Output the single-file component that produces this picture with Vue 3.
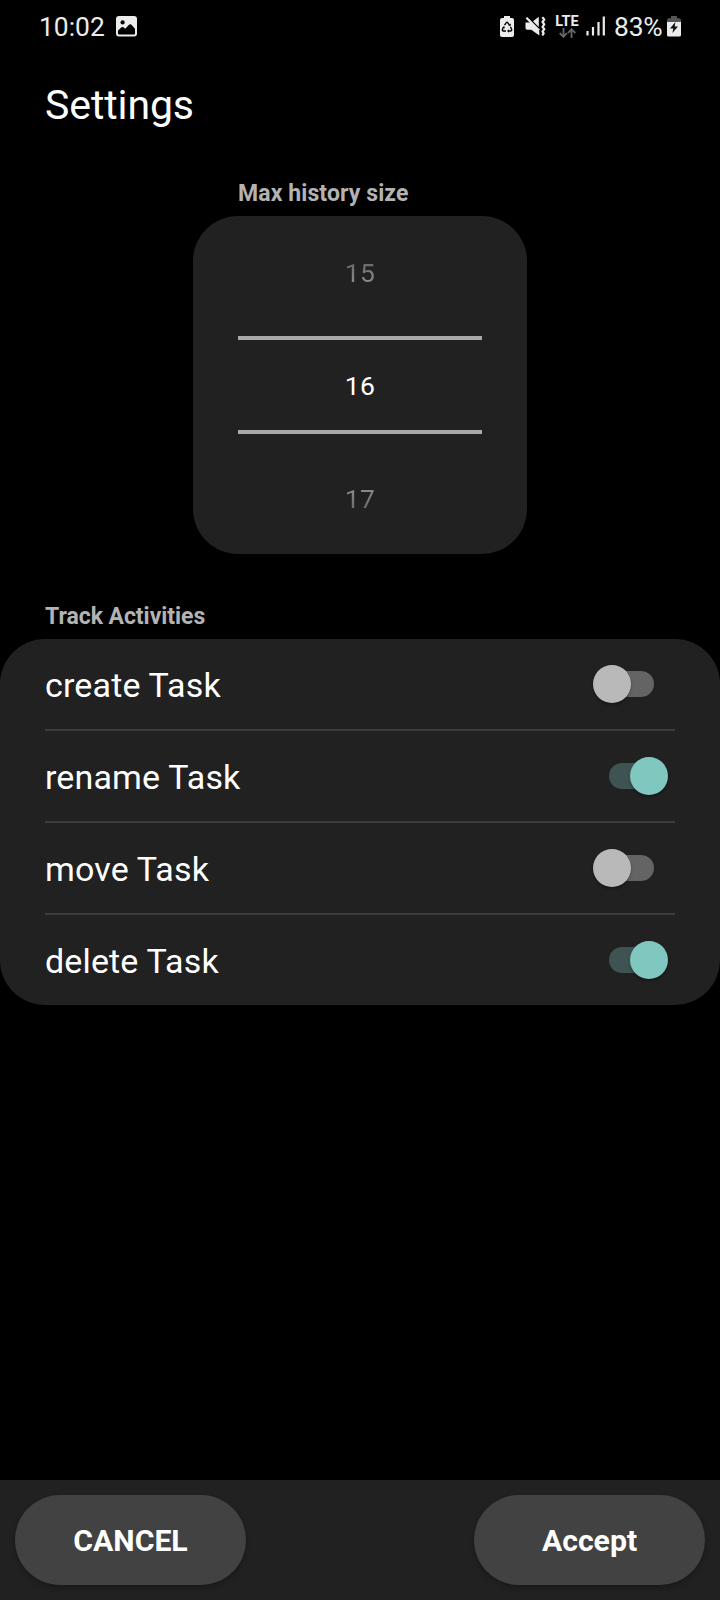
<script setup>
import { ref } from 'vue'

const historySizes = ref([15, 16, 17])
const selectedSize = ref(16)

const activities = ref([
  { label: 'create Task', enabled: false },
  { label: 'rename Task', enabled: true },
  { label: 'move Task', enabled: false },
  { label: 'delete Task', enabled: true },
])
</script>

<template>
  <div class="screen">
    <header class="status-bar">
      <span class="clock">10:02</span>
      <svg class="icon-image" width="22" height="22" viewBox="0 0 22 22">
        <rect x="1" y="1" width="21" height="20.5" rx="3" fill="#ececec" />
        <circle cx="7.6" cy="7.4" r="2.1" fill="#000" />
        <path d="M3 15.5 6.5 12.3Q7.5 11.5 8.5 12.3L10.2 13.8 14.3 9.6Q15.3 8.8 16.2 9.6L20 13.8V18.5Q20 19.5 19 19.5H4Q3 19.5 3 18.5Z" fill="#000" />
      </svg>
      <span class="spacer"></span>
      <svg class="icon-saver" width="14" height="22" viewBox="0 0 14 22">
        <path d="M4 0H10V2H12Q14 2 14 4V19Q14 21 12 21H2Q0 21 0 19V4Q0 2 2 2H4Z" fill="#ececec" />
        <g fill="none" stroke="#000" stroke-width="1.4">
          <path d="M4.5 9.2 6.3 6.7Q7 5.9 7.7 6.7L9.5 9.2" />
          <path d="M10.4 10.8 11.6 13.2Q12 14.8 10.7 15H8.3" />
          <path d="M6 15H3.5Q2 14.8 2.4 13.4L3.7 11" />
        </g>
        <path d="M8.2 9.7H10.8V7.4ZM8.9 13.2V16.8L7 15ZM2.2 11.6 4.2 10.1 4.9 12.5Z" fill="#000" />
      </svg>
      <svg class="icon-mute" width="21" height="21" viewBox="0 0 21 21">
        <path d="M0.5 6.6H5.3L14.3 15.6V19.5L6.3 13.7H2.2Q0.5 13.7 0.5 12Z" fill="#ececec" />
        <path d="M8 5.2 13.8 0.8V11Z" fill="#ececec" />
        <path d="M1.4 1.7 14.2 14.5" stroke="#ececec" stroke-width="2.2" />
        <path d="M17.3 1.3 19.3 3.5 17.5 6 19.3 8.4 17.5 10.8 19.3 13.2 17.5 15.6 18.7 17.3 17.3 19.3" fill="none" stroke="#ececec" stroke-width="2.2" stroke-linejoin="round" />
      </svg>
      <div class="network">
        <span>LTE</span>
        <svg width="17" height="10" viewBox="0 0 17 10" fill="none" stroke="#686868" stroke-width="1.8">
          <path d="M4.5 0V8.7M0.7 5 4.5 8.8 8 5" />
          <path d="M12.5 10V1.3M9 5 12.5 1.2 16.3 5" />
        </svg>
      </div>
      <svg class="icon-signal" width="20" height="20" viewBox="0 0 20 20" stroke="#ececec" stroke-width="2.2">
        <path d="M1.5 15V19.4M7 11V19.4M12.5 6V19.4M17.8 0.5V19.4" />
      </svg>
      <span class="percent">83%</span>
      <svg class="icon-battery" width="14" height="21" viewBox="0 0 14 21">
        <path d="M4 0H10V2.3H12Q14 2.3 14 4.3V6H0V4.3Q0 2.3 2 2.3H4Z" fill="#555" />
        <path d="M0 6H14V19Q14 20.5 12.5 20.5H1.5Q0 20.5 0 19Z" fill="#ececec" />
        <path d="M8.4 6 3 12.4H6.3L5.4 17 11 10.5H7.7Z" fill="#111" />
      </svg>
    </header>

    <h1 class="title">Settings</h1>

    <section class="history">
      <h2 class="section-label history-label">Max history size</h2>
      <div class="picker">
        <div
          v-for="size in historySizes"
          :key="size"
          class="option"
          :class="{ selected: size === selectedSize, below: size > selectedSize }"
        >
          <span>{{ size }}</span>
        </div>
      </div>
    </section>

    <section class="tracking">
      <h2 class="section-label">Track Activities</h2>
      <div class="activities">
        <div v-for="item in activities" :key="item.label" class="activity">
          <span class="name">{{ item.label }}</span>
          <button class="switch" :class="{ on: item.enabled }" @click="item.enabled = !item.enabled">
            <span class="thumb"></span>
          </button>
        </div>
      </div>
    </section>

    <footer class="actions">
      <button class="action">CANCEL</button>
      <button class="action">Accept</button>
    </footer>
  </div>
</template>

<style>
body {
  background: #000;
}
</style>

<style scoped>
.screen {
  width: 720px;
  height: 1600px;
  display: flex;
  flex-direction: column;
  overflow: hidden;
  background: #000;
  color: #fff;
  font-family: Roboto, sans-serif;
}

.screen * {
  box-sizing: border-box;
}

.status-bar {
  height: 56px;
  display: flex;
  align-items: flex-start;
  padding: 0 39px 0 39px;
  color: #ececec;
  font-size: 26.4px;
  line-height: 30px;
  flex: none;
}

.clock {
  width: 66px;
  margin-top: 12px;
}

.icon-image {
  margin: 15px 0 0 10px;
}

.spacer {
  flex: 1;
}

.icon-saver {
  margin-top: 16px;
}

.icon-mute {
  margin: 16px 0 0 11px;
}

.network {
  width: 24px;
  margin: 15px 0 0 9px;
  display: flex;
  flex-direction: column;
  align-items: center;
  font-size: 14.5px;
  font-weight: 700;
  line-height: 13px;
}

.icon-signal {
  margin: 16px 0 0 7px;
}

.percent {
  width: 49px;
  margin: 12px 0 0 8px;
  letter-spacing: -0.2px;
}

.icon-battery {
  margin: 16px 0 0 4px;
}

.title {
  margin: 24px 0 0 45px;
  font-size: 41px;
  font-weight: 400;
  line-height: 50px;
  letter-spacing: -0.1px;
}

.section-label {
  margin: 0;
  height: 30px;
  padding-top: 1px;
  color: #b3b3b3;
  font-size: 23px;
  font-weight: 700;
  line-height: 30px;
}

.history {
  width: 334px;
  margin: 48px auto 0;
}

.history-label {
  padding-left: 45px;
  margin-bottom: 8px;
  letter-spacing: 0.1px;
}

.picker {
  height: 338px;
  padding: 0 45px;
  display: flex;
  flex-direction: column;
  border-radius: 45px;
  background: #212121;
}

.option {
  height: 120px;
  padding-bottom: 6px;
  display: flex;
  flex: none;
  align-items: center;
  justify-content: center;
  font-size: 26.5px;
  line-height: 32px;
  letter-spacing: 0.3px;
}

.option span {
  color: transparent;
  background: linear-gradient(#606060, #959595);
  background-clip: text;
}

.option.below {
  padding: 10px 0 0;
}

.option.below span {
  background: linear-gradient(#959595, #606060);
  background-clip: text;
}

.option.selected {
  height: 98px;
  padding: 2px 0 0;
  border-top: 4px solid #a9a9a9;
  border-bottom: 4px solid #a9a9a9;
}

.option.selected span {
  color: #fff;
  background: none;
}

.tracking {
  margin-top: 47px;
}

.tracking .section-label {
  padding-left: 45px;
  margin-bottom: 8px;
  letter-spacing: -0.05px;
}

.activities {
  padding: 0 45px;
  border-radius: 45px;
  background: #212121;
}

.activity {
  height: 92px;
  display: flex;
  align-items: center;
  justify-content: space-between;
  border-bottom: 2px solid #3c3c3c;
}

.activity:last-child {
  height: 90px;
  border-bottom: 0;
}

.name {
  font-size: 34px;
  line-height: 40px;
  letter-spacing: 0.15px;
  padding-top: 2px;
}

.switch {
  width: 45px;
  height: 26px;
  margin-right: 21px;
  padding: 0;
  display: flex;
  align-items: center;
  border: 0;
  border-radius: 13px;
  background: #646464;
}

.thumb {
  width: 38px;
  height: 38px;
  flex: none;
  margin-left: -16px;
  border-radius: 50%;
  background: #b9b9b9;
  box-shadow: 0 2px 3px rgba(0, 0, 0, 0.3);
}

.switch.on {
  background: #3f5452;
}

.switch.on .thumb {
  margin-left: 21px;
  background: #80c7c0;
}

.actions {
  height: 120px;
  margin-top: auto;
  padding: 15px 15px 0;
  display: flex;
  justify-content: space-between;
  background: #212121;
}

.action {
  width: 231px;
  height: 90px;
  padding: 2px 0 0;
  border: 0;
  border-radius: 45px;
  background: #424242;
  color: #fff;
  font-family: inherit;
  font-size: 30.2px;
  font-weight: 700;
  line-height: 36px;
  box-shadow: 0 3px 5px rgba(0, 0, 0, 0.25);
}
</style>
